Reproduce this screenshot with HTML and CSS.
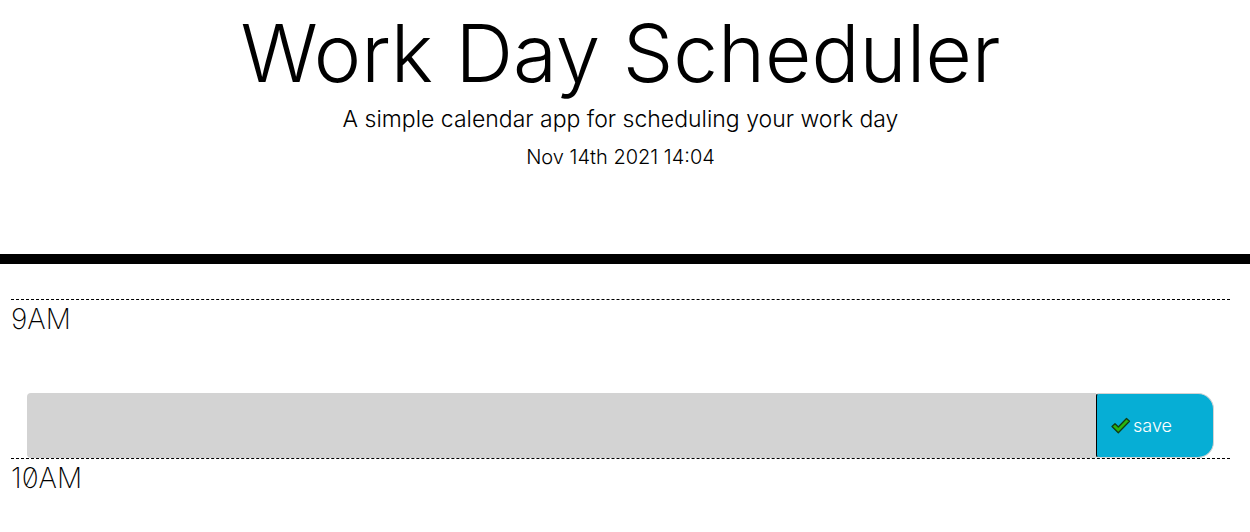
FILE: index.html
```html
<!DOCTYPE html>
<html lang="en">
<head>
<meta charset="utf-8">
<meta name="viewport" content="width=device-width, initial-scale=1">
<title>Work Day Scheduler</title>
<link rel="stylesheet" href="styles.css">
</head>
<body>
<header class="masthead">
  <h1 class="title">Work Day Scheduler</h1>
  <p class="lead">A simple calendar app for scheduling your work day</p>
  <p class="date">Nov 14th 2021 14:04</p>
</header>
<main class="schedule">
  <section class="hour">
    <h2 class="time" id="hour-9">9AM</h2>
    <form class="entry">
      <textarea class="task" aria-labelledby="hour-9"></textarea>
      <button class="save" type="button">
        <svg class="check" viewBox="0 0 20 18" aria-hidden="true">
          <path d="M1 9.5 4 6.7 7.3 10 15.5 1.5 18.5 4.3 7.3 15.8Z"/>
        </svg>
        <span>save</span>
      </button>
    </form>
  </section>
  <section class="hour">
    <h2 class="time">10AM</h2>
  </section>
</main>
</body>
</html>
```
FILE: styles.css
```css
* {
  box-sizing: border-box;
}

body {
  margin: 0;
  background: #fff;
  color: #000;
  font-family: Inter, "Liberation Sans", sans-serif;
  font-weight: 300;
}

.masthead {
  padding: 6px 20px 78px 11px;
  border-bottom: 10px solid #000;
  text-align: center;
}

.title {
  margin: 0;
  font-size: 80px;
  font-weight: 300;
  line-height: 94px;
}

.lead,
.date {
  margin: 0;
  line-height: 38px;
}

.lead {
  font-size: 23px;
}

.date {
  font-size: 20px;
}

.schedule {
  padding: 35px 20px 0 11px;
}

.hour {
  border-top: 1px dashed #000;
}

.time {
  margin: 0;
  font-size: 28px;
  font-weight: 200;
  font-feature-settings: "zero";
  line-height: 38px;
}

.entry {
  display: flex;
  height: 65px;
  margin: 55px 16px 0;
}

.task {
  flex: 1;
  min-width: 0;
  padding: 8px;
  border: 0;
  border-radius: 4px 0 0 4px;
  background: #d3d3d3;
  font: inherit;
  resize: none;
}

.save {
  display: flex;
  align-items: center;
  gap: 2px;
  width: 118px;
  padding: 0 14px;
  border: 1px solid #d3d3d3;
  border-left-color: #000;
  border-radius: 3px 16px 16px 3px;
  background: #06aed5;
  color: #fff;
  font: inherit;
  font-size: 18px;
}

.check {
  width: 20px;
  height: 18px;
  fill: #2bb40e;
  stroke: #123c12;
  stroke-width: 1.3;
  stroke-linejoin: round;
}
```
